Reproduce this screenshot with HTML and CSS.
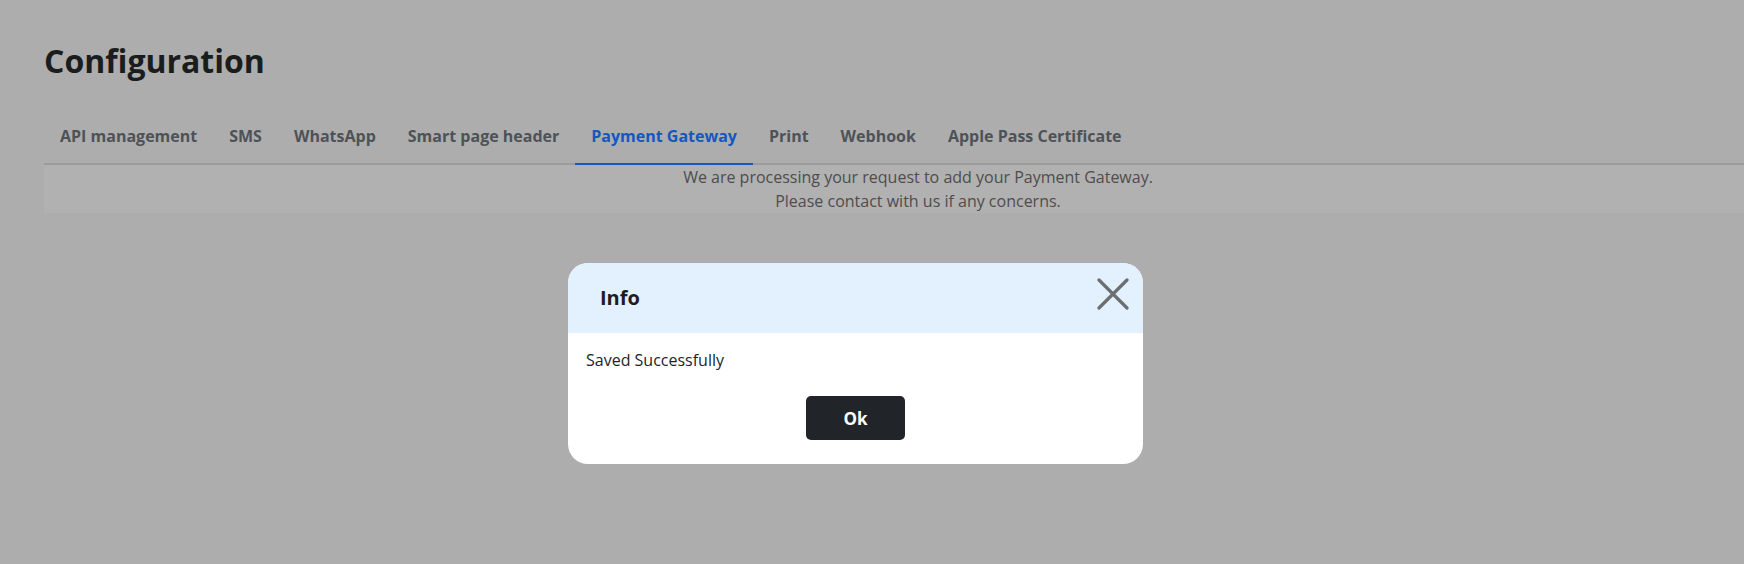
FILE: index.html
```html
<!DOCTYPE html>
<html lang="en">
<head>
  <meta charset="UTF-8" />
  <meta name="viewport" content="width=device-width, initial-scale=1.0" />
  <title>Configuration</title>
  <link rel="stylesheet" href="styles.css">
</head>
<body>
  <div class="page">
    <h1 class="title">Configuration</h1>

    <ul class="tabs">
      <li><a href="#">API management</a></li>
      <li><a href="#">SMS</a></li>
      <li><a href="#">WhatsApp</a></li>
      <li><a href="#">Smart page header</a></li>
      <li><a href="#" class="active">Payment Gateway</a></li>
      <li><a href="#">Print</a></li>
      <li><a href="#">Webhook</a></li>
      <li><a href="#">Apple Pass Certificate</a></li>
    </ul>

    <div class="notice">
      We are processing your request to add your Payment Gateway.<br>
      Please contact with us if any concerns.
    </div>
  </div>

  <div class="modal">
    <div class="modal-header">
      <h5 class="modal-title">Info</h5>
      <button class="close" type="button" aria-label="Close">
        <svg width="32" height="32" viewBox="0 0 32 32">
          <path d="M2 2 L30 30 M30 2 L2 30" stroke="#6c6f72" stroke-width="3.2" stroke-linecap="round" fill="none"/>
        </svg>
      </button>
    </div>
    <div class="modal-body">
      <p>Saved Successfully</p>
      <div class="actions">
        <button class="btn-ok" type="button">Ok</button>
      </div>
    </div>
  </div>
</body>
</html>
```

FILE: styles.css
```css
body { margin: 0; background: #adadad; font-family: "Open Sans", "Noto Sans", sans-serif; font-size: 16px; line-height: 24px; height: 564px; overflow: hidden; position: relative; }
.page { padding: 42px 0 0 44px; }
.title { margin: 0; font-size: 32px; line-height: 38px; font-weight: 700; color: #1b1c1e; }
.tabs { list-style: none; margin: 36px 0 0; padding: 0; display: flex; border-bottom: 2px solid #9b9b9b; }
.tabs a { display: block; padding: 8px 16px 15px; margin-bottom: -2px; font-weight: 700; color: #4e5257; text-decoration: none; border-bottom: 2px solid transparent; }
.tabs a.active { color: #1557bf; border-bottom-color: #1557bf; }
.notice { background: #b1b1b1; text-align: center; color: #4d4d4d; padding-left: 48px; height: 48px; }

.modal { position: absolute; left: 568px; top: 263px; width: 575px; background: #fff; border-radius: 20px; overflow: hidden; }
.modal-header { height: 70px; background: #e3f0fe; display: flex; align-items: center; justify-content: space-between; padding: 0 14px 0 32px; box-sizing: border-box; }
.modal-title { margin: 0; font-size: 20px; font-weight: 700; color: #1d1d1f; line-height: 28px; }
.close { border: 0; background: none; padding: 0; width: 32px; height: 32px; align-self: flex-start; margin-top: 15px; }
.close svg { display: block; }
.modal-body { padding: 15px 18px 24px; color: #212529; }
.modal-body p { margin: 0; }
.actions { display: flex; justify-content: center; margin-top: 24px; }
.btn-ok { width: 99px; height: 44px; background: #212529; color: #fff; border: 0; border-radius: 5px; font-family: "Open Sans", sans-serif; font-size: 17px; font-weight: 700; }
```
